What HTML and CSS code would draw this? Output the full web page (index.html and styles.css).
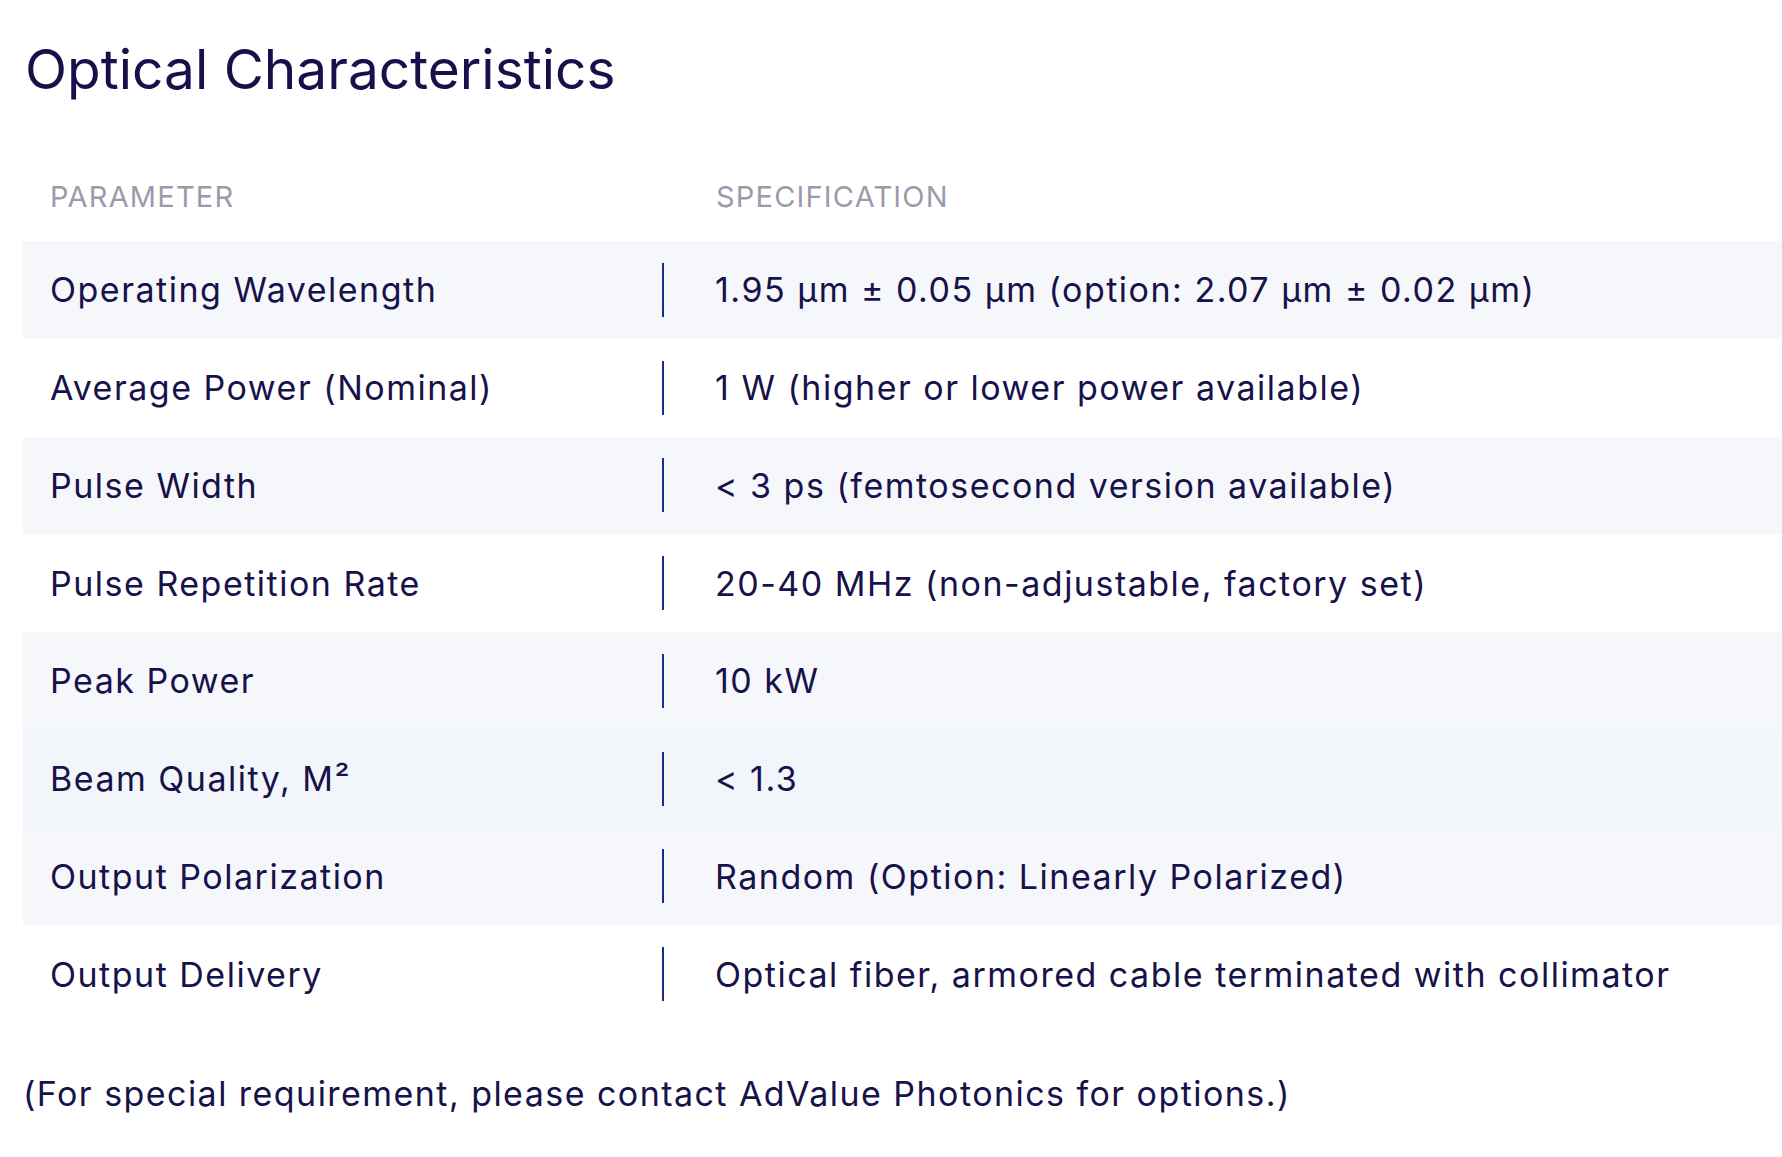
FILE: index.html
```html
<!DOCTYPE html>
<html lang="en">
<head>
<meta charset="utf-8">
<title>Optical Characteristics</title>
<link rel="stylesheet" href="styles.css">
</head>
<body>
<main class="page">
  <h2 class="title">Optical Characteristics</h2>
  <div class="spec-table">
    <div class="row head">
      <div class="cell param">PARAMETER</div>
      <div class="cell value"><span class="head-text">SPECIFICATION</span></div>
    </div>
    <div class="row shade">
      <div class="cell param">Operating Wavelength</div>
      <div class="cell value"><span class="val">1.95 µm ± 0.05 µm (option: 2.07 µm ± 0.02 µm)</span></div>
    </div>
    <div class="row">
      <div class="cell param">Average Power (Nominal)</div>
      <div class="cell value"><span class="val">1 W (higher or lower power available)</span></div>
    </div>
    <div class="row shade">
      <div class="cell param">Pulse Width</div>
      <div class="cell value"><span class="val">&lt; 3 ps (femtosecond version available)</span></div>
    </div>
    <div class="row">
      <div class="cell param">Pulse Repetition Rate</div>
      <div class="cell value"><span class="val">20-40 MHz (non-adjustable, factory set)</span></div>
    </div>
    <div class="row shade">
      <div class="cell param">Peak Power</div>
      <div class="cell value"><span class="val">10 kW</span></div>
    </div>
    <div class="row hover">
      <div class="cell param">Beam Quality, M²</div>
      <div class="cell value"><span class="val">&lt; 1.3</span></div>
    </div>
    <div class="row shade">
      <div class="cell param">Output Polarization</div>
      <div class="cell value"><span class="val">Random (Option: Linearly Polarized)</span></div>
    </div>
    <div class="row">
      <div class="cell param">Output Delivery</div>
      <div class="cell value"><span class="val">Optical fiber, armored cable terminated with collimator</span></div>
    </div>
  </div>
  <p class="note">(For special requirement, please contact AdValue Photonics for options.)</p>
</main>
</body>
</html>
```
FILE: styles.css
```css
* { box-sizing: border-box; }
html, body { margin: 0; padding: 0; background: #ffffff; }
body {
  font-family: Inter, "Noto Sans", "Liberation Sans", sans-serif;
  color: #17124a;
}
.page {
  padding-left: 23px;
  overflow: hidden;
}
.title {
  margin: 36px 0 0 2px;
  font-size: 55px;
  line-height: 66px;
  font-weight: 400;
  letter-spacing: 0;
  color: #16114a;
}
.spec-table {
  margin-top: 77px;
  display: flex;
  flex-direction: column;
}
.row {
  display: grid;
  grid-template-columns: 639px 1fr;
  align-items: center;
  height: 97.75px;
  font-size: 34px;
  letter-spacing: 1.5px;
}
.row.head {
  height: auto;
  padding-bottom: 27px;
  font-size: 29px;
  line-height: 35px;
  color: #9b9bab;
  letter-spacing: 1.2px;
}
.row.shade { background: #f6f7fa; }
.row.hover { background: #f2f5f9; }
.cell.param { padding-left: 27px; white-space: nowrap; }
.cell.value { display: flex; align-items: center; }
.head-text { padding-left: 54px; }
.val {
  display: flex;
  align-items: center;
  height: 54px;
  border-left: 2px solid #1b2b8c;
  padding-left: 51px;
  white-space: nowrap;
}
.note {
  margin: 50px 0 0 0;
  font-size: 34px;
  line-height: 41px;
  letter-spacing: 1.45px;
}
```
